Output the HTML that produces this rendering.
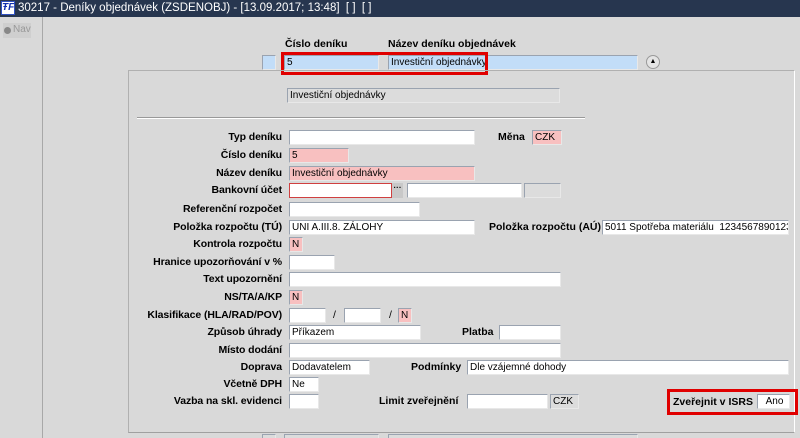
<!DOCTYPE html>
<html><head><meta charset="utf-8"><style>
*{box-sizing:border-box;margin:0;padding:0}
html,body{width:800px;height:438px;overflow:hidden}
body{background:#d9d9d9;font-family:"Liberation Sans",Arial,sans-serif;font-size:10.5px;position:relative;color:#000}
.a{position:absolute}
.t{position:absolute;height:17px;left:0;top:0;width:800px;background:#27364f;color:#fff;font-size:11.5px;line-height:17px;padding-left:18px}
.l{position:absolute;font-weight:bold;font-size:10.5px;text-align:right;width:200px;line-height:15px;letter-spacing:-0.1px}
.f{position:absolute;height:15px;background:#fff;border:1px solid #9aa3b0;border-right-color:#e8e8e8;border-bottom-color:#e8e8e8;font-size:10px;line-height:13px;padding-left:2px;white-space:nowrap;overflow:hidden}
.p{background:#f8c0c0}
.g{background:#dcdcdc}
.b{background:#c2ddf8}
.r{position:absolute;border:3px solid #e00000}
.bl{font-weight:bold;line-height:15px;font-size:10.5px}
</style></head><body>
<div class="t">30217 - Deníky objednávek (ZSDENOBJ) - [13.09.2017; 13:48]&nbsp; [ ]&nbsp; [ ]</div>
<div class="a" style="left:1px;top:1px;width:14px;height:14px;background:#fff;border:1px solid #3050c0;color:#1030b0;font-size:10px;font-weight:bold;font-style:italic;line-height:12px;text-align:center">ŦF</div>
<div class="a" style="left:42px;top:17px;width:1px;height:421px;background:#a8a8a8"></div>
<div class="a" style="left:3px;top:23px;width:28px;height:15px;background:#cfcfcf"></div>
<div class="a" style="left:4px;top:27px;width:7px;height:7px;border-radius:50%;background:#888"></div>
<div class="a" style="left:13px;top:24px;color:#999;font-size:10px">Nav</div>
<div class="a bl" style="left:285px;top:37px">Číslo deníku</div>
<div class="a bl" style="left:388px;top:37px">Název deníku objednávek</div>
<div class="f b" style="left:262px;top:55px;width:14px"></div>
<div class="f b" style="left:284px;top:55px;width:95px">5</div>
<div class="f b" style="left:388px;top:55px;width:250px">Investiční objednávky</div>
<div class="r" style="left:281px;top:52px;width:207px;height:23px"></div>
<div class="a" style="left:646px;top:55px;width:14px;height:14px;border-radius:50%;border:1px solid #999;background:#e4e4e4;font-size:7px;text-align:center;line-height:12px">▲</div>
<div class="a" style="left:128px;top:70px;width:667px;height:363px;border:1px solid #b0b0b0;border-right-color:#fff;border-bottom-color:#a0a0a0"></div>
<div class="f g" style="left:287px;top:88px;width:273px">Investiční objednávky</div>
<div class="a" style="left:137px;top:117px;width:448px;height:2px;border-top:1px solid #999;border-bottom:1px solid #fff"></div>

<div class="l" style="left:82px;top:130px">Typ deníku</div><div class="f" style="left:289px;top:130px;width:186px"></div>
<div class="a bl" style="left:498px;top:130px">Měna</div><div class="f p" style="left:532px;top:130px;width:30px">CZK</div>
<div class="l" style="left:82px;top:148px">Číslo deníku</div><div class="f p" style="left:289px;top:148px;width:60px">5</div>
<div class="l" style="left:82px;top:166px">Název deníku</div><div class="f p" style="left:289px;top:166px;width:186px">Investiční objednávky</div>
<div class="l" style="left:82px;top:183px">Bankovní účet</div><div class="f" style="left:289px;top:183px;width:103px;border-color:#d04040"></div>
<div class="a" style="left:392px;top:183px;width:11px;height:15px;background:#c8c8c8;font-size:8px;font-weight:bold;text-align:center;line-height:10px">···</div>
<div class="f" style="left:407px;top:183px;width:115px"></div><div class="f g" style="left:524px;top:183px;width:37px"></div>
<div class="l" style="left:82px;top:202px">Referenční rozpočet</div><div class="f" style="left:289px;top:202px;width:131px"></div>
<div class="l" style="left:82px;top:220px">Položka rozpočtu (TÚ)</div><div class="f" style="left:289px;top:220px;width:186px">UNI A.III.8. ZÁLOHY</div>
<div class="a bl" style="left:489px;top:220px">Položka rozpočtu (AÚ)</div><div class="f" style="left:602px;top:220px;width:187px">5011 Spotřeba materiálu&nbsp; 123456789012345</div>
<div class="l" style="left:82px;top:237px">Kontrola rozpočtu</div><div class="f p" style="left:289px;top:237px;width:14px">N</div>
<div class="l" style="left:82px;top:255px">Hranice upozorňování v %</div><div class="f" style="left:289px;top:255px;width:46px"></div>
<div class="l" style="left:82px;top:272px">Text upozornění</div><div class="f" style="left:289px;top:272px;width:272px"></div>
<div class="l" style="left:82px;top:290px">NS/TA/A/KP</div><div class="f p" style="left:289px;top:290px;width:14px">N</div>
<div class="l" style="left:82px;top:308px">Klasifikace (HLA/RAD/POV)</div><div class="f" style="left:289px;top:308px;width:37px"></div>
<div class="a" style="left:333px;top:309px">/</div><div class="f" style="left:344px;top:308px;width:37px"></div>
<div class="a" style="left:389px;top:309px">/</div><div class="f p" style="left:398px;top:308px;width:14px">N</div>
<div class="l" style="left:82px;top:325px">Způsob úhrady</div><div class="f" style="left:289px;top:325px;width:132px">Příkazem</div>
<div class="a bl" style="left:462px;top:325px">Platba</div><div class="f" style="left:499px;top:325px;width:62px"></div>
<div class="l" style="left:82px;top:343px">Místo dodání</div><div class="f" style="left:289px;top:343px;width:272px"></div>
<div class="l" style="left:82px;top:360px">Doprava</div><div class="f" style="left:289px;top:360px;width:81px">Dodavatelem</div>
<div class="a bl" style="left:411px;top:360px">Podmínky</div><div class="f" style="left:467px;top:360px;width:322px">Dle vzájemné dohody</div>
<div class="l" style="left:82px;top:377px">Včetně DPH</div><div class="f" style="left:289px;top:377px;width:30px">Ne</div>
<div class="l" style="left:82px;top:394px">Vazba na skl. evidenci</div><div class="f" style="left:289px;top:394px;width:30px"></div>
<div class="a bl" style="left:379px;top:394px">Limit zveřejnění</div><div class="f" style="left:467px;top:394px;width:81px"></div>
<div class="f g" style="left:550px;top:394px;width:29px">CZK</div>
<div class="r" style="left:667px;top:389px;width:131px;height:26px"></div>
<div class="a bl" style="left:673px;top:395px">Zveřejnit v ISRS</div>
<div class="f" style="left:757px;top:394px;width:33px;text-align:center">Ano</div>
<div class="f g" style="left:262px;top:434px;width:14px"></div>
<div class="f g" style="left:284px;top:434px;width:95px"></div>
<div class="f g" style="left:388px;top:434px;width:250px"></div>
</body></html>
